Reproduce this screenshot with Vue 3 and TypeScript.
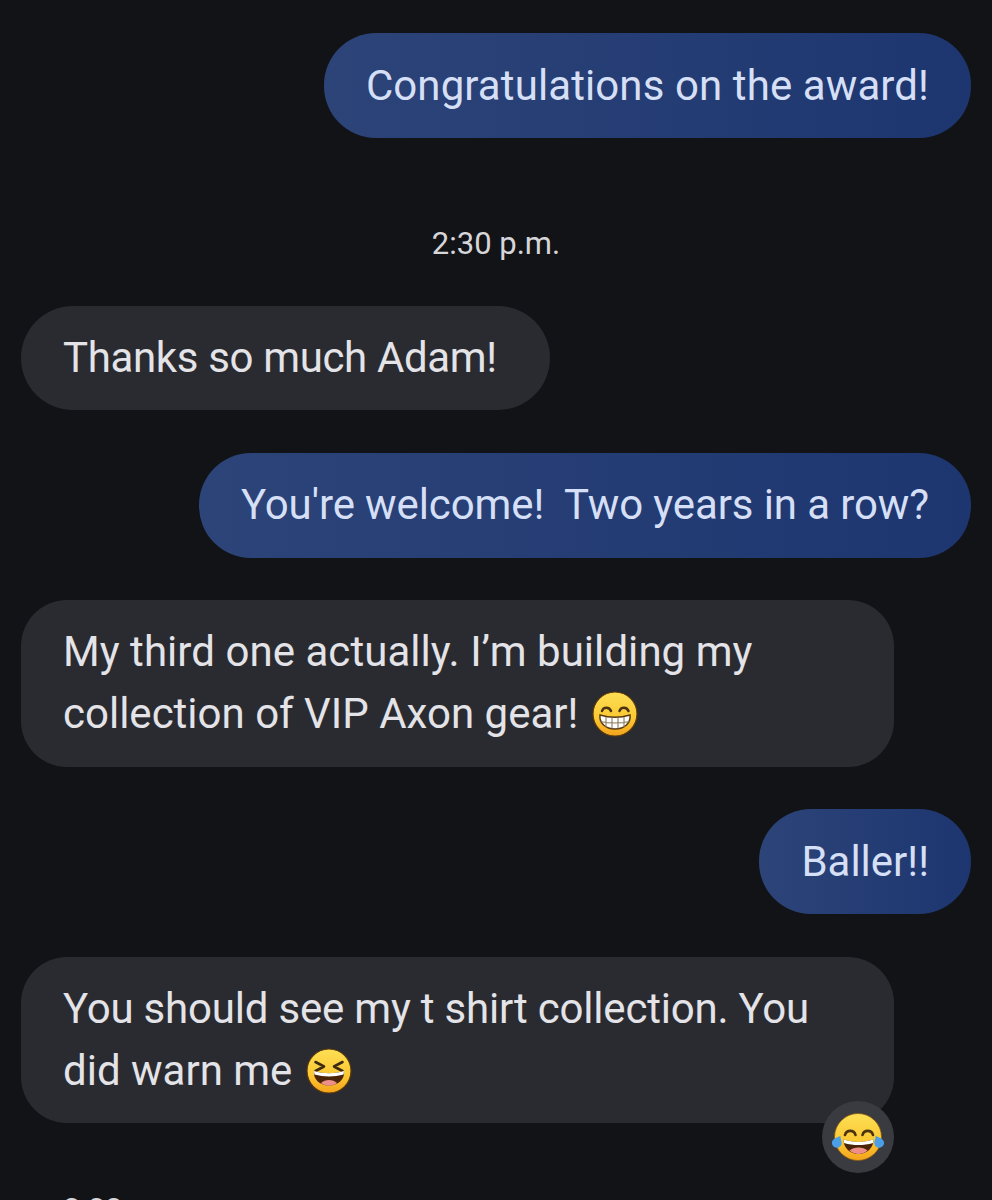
<script setup lang="ts">
type Kind = 'grin' | 'squint'
interface Line { text: string; track: number }
interface Msg { id: number; sent?: boolean; lines: Line[]; emoji?: Kind; time?: string; reaction?: boolean; wide?: boolean; roomy?: boolean }
const messages: Msg[] = [
  { id: 1, sent: true, lines: [{ text: 'Congratulations on the award!', track: 0.1 }] },
  { id: 2, time: '2:30 p.m.', roomy: true, lines: [{ text: 'Thanks so much Adam!', track: -0.35 }] },
  { id: 3, sent: true, lines: [{ text: "You're welcome!\u00a0 Two years in a row?", track: -0.11 }] },
  {
    id: 4,
    wide: true,
    lines: [
      { text: 'My third one actually. I’m building my', track: 0.05 },
      { text: 'collection of VIP Axon gear!', track: 0 }
    ],
    emoji: 'grin'
  },
  { id: 5, sent: true, lines: [{ text: 'Baller!!', track: 0 }] },
  {
    id: 6,
    wide: true,
    lines: [
      { text: 'You should see my t shirt collection. You', track: -0.2 },
      { text: 'did warn me', track: 0 }
    ],
    emoji: 'squint',
    reaction: true
  }
]
</script>

<template>
  <main class="thread">
    <svg width="0" height="0" class="defs" aria-hidden="true">
      <defs>
        <linearGradient id="face" x1="0" y1="0" x2="0" y2="1">
          <stop offset="0" stop-color="#fddf55" />
          <stop offset="0.6" stop-color="#fbc832" />
          <stop offset="1" stop-color="#f3a31c" />
        </linearGradient>
      </defs>
    </svg>
    <template v-for="m in messages" :key="m.id">
      <div v-if="m.time" class="time">{{ m.time }}</div>
      <div class="row" :class="{ sent: m.sent }">
        <div class="bubble" :class="{ sent: m.sent, wide: m.wide, roomy: m.roomy }">
          <div v-for="(l, i) in m.lines" :key="i" class="line">
            <span :style="{ letterSpacing: l.track + 'px' }">{{ l.text }}</span>
            <template v-if="m.emoji && i === m.lines.length - 1">
              <svg v-if="m.emoji === 'grin'" class="emoji" viewBox="0 0 46 46">
                <circle cx="23" cy="23" r="22" fill="url(#face)" stroke="#5e3a0c" stroke-width="1.200" />
                <path d="M10 20c1.300-4.500 7.500-4.500 9 0M27.500 20c1.300-4.500 7.500-4.500 9 0" fill="none" stroke="#4a3212" stroke-width="2.500" stroke-linecap="round" />
                <path d="M8 24c10 3 20 3 30 0 1 8-5.500 14-15 14S7 32 8 24z" fill="#fff" stroke="#5a3a10" stroke-width="1.500" />
                <path d="M8.500 30.500c9.500 2 19.500 2 29 0M14 26v10M20 27v10.500M26 27v10.500M32 26v10" fill="none" stroke="#8a7a5a" stroke-width="1.100" />
              </svg>
              <svg v-else class="emoji" viewBox="0 0 46 46">
                <circle cx="23" cy="23" r="22" fill="url(#face)" stroke="#5e3a0c" stroke-width="1.200" />
                <path d="M9.500 14l8.500 4.500-8.500 4.500M36.500 14L28 18.500l8.500 4.500" fill="none" stroke="#3c2a12" stroke-width="2.600" stroke-linecap="round" stroke-linejoin="round" />
                <path d="M8 23c10 3 20 3 30 0 1 8-5.500 14.500-15 14.500S7 31 8 23z" fill="#4a2408" />
                <path d="M8 23c10 3 20 3 30 0l-.4 3.500c-9.500 2.500-19.700 2.500-29.200 0z" fill="#fff" />
                <path d="M15 35c4-4 12-4 16 0-4.500 3.500-11.500 3.500-16 0z" fill="#ef8f8a" />
              </svg>
            </template>
          </div>
          <div v-if="m.reaction" class="reaction">
            <svg class="laugh" viewBox="0 0 54 54">
              <circle cx="27" cy="27" r="23.500" fill="url(#face)" stroke="#8a5a10" stroke-width="0.800" />
              <path d="M14 25c1.500-5.500 9-5.500 10.500 0M31.500 25c1.500-5.500 9-5.500 10.500 0" fill="none" stroke="#4a3212" stroke-width="2.600" stroke-linecap="round" />
              <path d="M12.500 29.500c10 3.200 20 3.200 30 0 0 8-6 14.500-15 14.500s-15-6.500-15-14.500z" fill="#4a2408" />
              <path d="M12.500 29.500c10 3.200 20 3.200 30 0l-.5 3.500c-9.500 2.700-19.500 2.700-29 0z" fill="#fff" />
              <path d="M18.500 40.500c4.500-4 13.500-4 18 0-4.500 4.500-13.500 4.500-18 0z" fill="#ef8f8a" />
              <path d="M9.500 26c-.5 2.500 1.500 5 1.200 7.500-.4 2.800-2.700 4.500-5.200 4.200-3-.3-5-3-4.500-5.700.5-2.700 5-5 8.500-6z" fill="#4a9fe8" />
              <path d="M44.500 26c.5 2.500-1.500 5-1.200 7.500.4 2.800 2.700 4.500 5.200 4.200 3-.3 5-3 4.500-5.700-.5-2.700-5-5-8.500-6z" fill="#4a9fe8" />
            </svg>
          </div>
        </div>
      </div>
    </template>
    <div class="time left">2:33 p.m.</div>
  </main>
</template>

<style scoped>
.thread {
  width: 992px;
  height: 1200px;
  overflow: hidden;
  box-sizing: border-box;
  padding: 33.4px 21px 0;
  background: #121317;
  display: flex;
  flex-direction: column;
  gap: 42.8px;
  font-family: Roboto, "Noto Sans", sans-serif;
  font-size: 42px;
  color: #e3e3e8;
}
.defs { position: absolute; }
.row { display: flex; }
.row.sent { justify-content: flex-end; }
.bubble {
  position: relative;
  box-sizing: border-box;
  padding: 21.2px 42px;
  border-radius: 52px;
  background: #2a2b30;
}
.bubble.wide { width: 873px; border-radius: 46px; }
.bubble.roomy { padding-right: 53px; }
.bubble.sent {
  background: linear-gradient(90deg, #2c4478, #1d3670);
  color: #d5dff5;
}
.line {
  height: 62px;
  line-height: 62px;
  white-space: nowrap;
  display: flex;
  align-items: center;
  gap: 14px;
}
.emoji { width: 46px; height: 46px; flex: none; }
.reaction {
  position: absolute;
  right: 0;
  bottom: -50px;
  width: 72px;
  height: 72px;
  border-radius: 50%;
  background: #3a3b40;
  display: flex;
  align-items: center;
  justify-content: center;
}
.laugh { width: 54px; height: 54px; }
.time {
  font-size: 31px;
  line-height: 36px;
  text-align: center;
  color: #d6d6da;
  margin: 45px 0 1.6px;
}
.time.left { text-align: left; padding-left: 42px; margin: 26px 0 0; flex: none; }
</style>
